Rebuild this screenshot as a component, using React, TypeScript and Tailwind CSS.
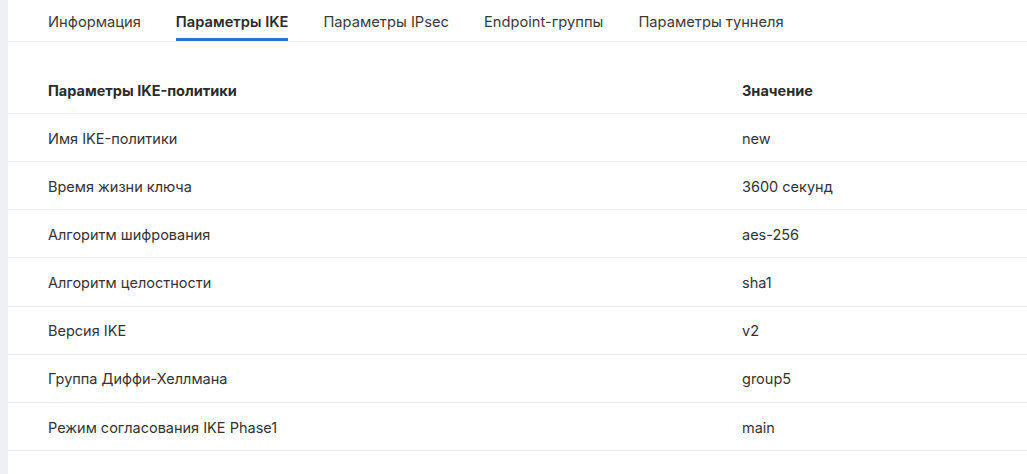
import React from "react";

const rows: [string, string][] = [
  ["Имя IKE-политики", "new"],
  ["Время жизни ключа", "3600 секунд"],
  ["Алгоритм шифрования", "aes-256"],
  ["Алгоритм целостности", "sha1"],
  ["Версия IKE", "v2"],
  ["Группа Диффи-Хеллмана", "group5"],
  ["Режим согласования IKE Phase1", "main"],
];

const tabs = ["Информация", "Параметры IKE", "Параметры IPsec", "Endpoint-группы", "Параметры туннеля"];

export default function App() {
  return (
    <div className="flex h-[474px] w-full bg-white text-[#333333]" style={{ fontFamily: "Inter, 'Noto Sans', sans-serif" }}>
      <div className="w-[8px] shrink-0 bg-[#eef0f5]" />
      <div className="flex-1 flex flex-col">
        <div className="flex h-[42px] items-stretch gap-[35px] border-b border-[#eeeeee] pl-[40px]">
          {tabs.map((t, i) => (
            <div
              key={t}
              className={
                i === 1
                  ? "flex items-center border-b-[3px] border-[#3a6cc3] pt-[6px] text-[14.7px] font-semibold text-[#2b2b2b]"
                  : "flex items-center border-b-[3px] border-transparent pt-[6px] text-[14.7px] text-[#3a3a3a]"
              }
            >
              {t}
            </div>
          ))}
        </div>
        <div className="pt-[24px]">
          <div className="flex h-[48px] items-center border-b border-[#eeeeee] pt-[2px] text-[14.5px] font-bold text-[#2b2b2b]">
            <div className="w-[734px] pl-[40px]">Параметры IKE-политики</div>
            <div>Значение</div>
          </div>
          {rows.map(([k, v]) => (
            <div key={k} className="flex h-[48.15px] items-center border-b border-[#eeeeee] pt-[2px] text-[14.5px] text-[#333333]">
              <div className="w-[734px] pl-[40px]">{k}</div>
              <div>{v}</div>
            </div>
          ))}
        </div>
      </div>
    </div>
  );
}
